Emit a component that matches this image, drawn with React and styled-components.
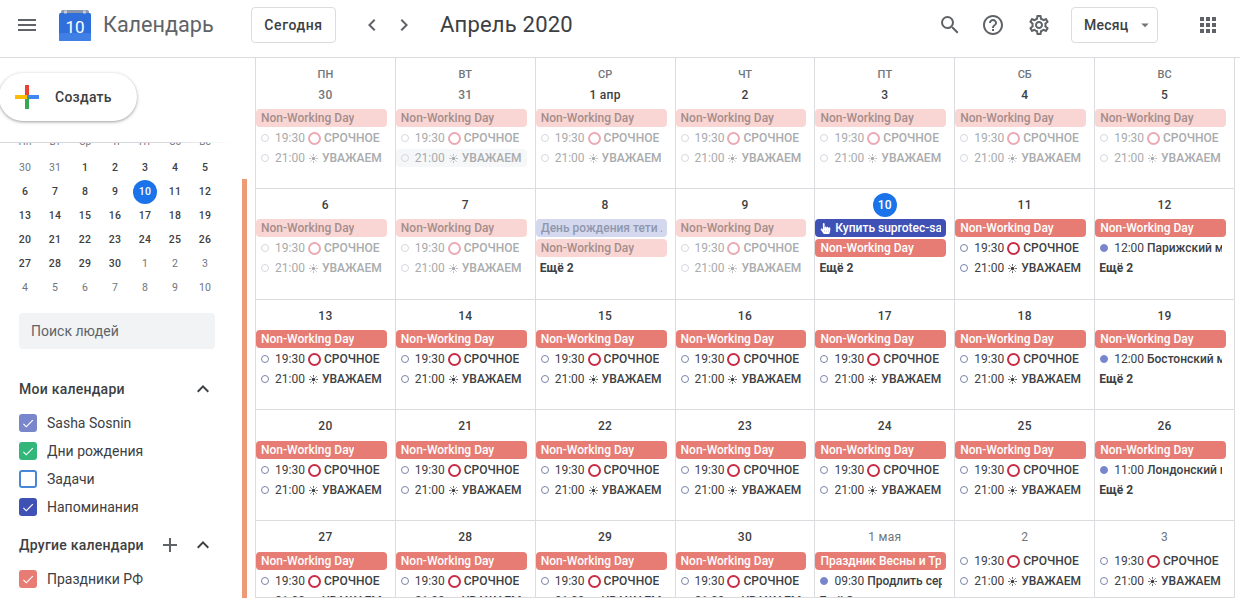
// App.jsx
import styled, { createGlobalStyle } from "styled-components";
import {
  MdMenu,
  MdChevronLeft,
  MdChevronRight,
  MdSearch,
  MdHelpOutline,
  MdOutlineSettings,
  MdApps,
  MdArrowDropDown,
  MdExpandLess,
  MdAdd,
  MdCheck,
} from "react-icons/md";
import { FaHandPointer } from "react-icons/fa";

const GlobalStyle = createGlobalStyle`
  html, body {
    margin: 0;
    height: 100%;
    overflow: hidden;
    background: #fff;
    font-family: Roboto, "Liberation Sans", sans-serif;
    color: #3c4043;
  }
`;

const Page = styled.div`
  width: 1240px;
  height: 598px;
  display: flex;
  flex-direction: column;
  overflow: hidden;
`;

const Header = styled.header`
  height: 57px;
  flex: none;
  display: flex;
  align-items: flex-start;
  border-bottom: 1px solid #dadce0;
  box-sizing: content-box;
`;

const IconSlot = styled.div`
  width: ${(p) => p.$w || 32}px;
  height: 50px;
  flex: none;
  display: flex;
  align-items: center;
  justify-content: center;
  color: #5f6368;
  margin-left: ${(p) => p.$ml || 0}px;
  margin-right: ${(p) => p.$mr || 0}px;
`;

const Brand = styled.div`
  font-size: 21.6px;
  line-height: 50px;
  color: #5f6368;
  margin-left: 12px;
  width: 148px;
  flex: none;
`;

const OutlineButton = styled.div`
  height: 36px;
  margin-top: 7px;
  margin-left: ${(p) => p.$ml || 0}px;
  width: ${(p) => p.$w}px;
  flex: none;
  box-sizing: border-box;
  border: 1px solid #dadce0;
  border-radius: 4px;
  display: flex;
  align-items: center;
  justify-content: center;
  font-size: 14px;
  font-weight: 500;
  letter-spacing: 0.6px;
  color: #3c4043;
`;

const ViewButton = styled(OutlineButton)`
  justify-content: space-between;
  padding: 0 3px 0 12px;
  letter-spacing: 0.25px;
`;

const Title = styled.div`
  font-size: 22px;
  letter-spacing: 0.2px;
  line-height: 50px;
  color: #3c4043;
  margin-left: 20px;
  flex: 1;
`;

const LogoBox = styled.svg`
  flex: none;
  margin: 9px 0 0 20px;
`;

const Body = styled.div`
  flex: 1;
  display: flex;
  min-height: 0;
`;

const Sidebar = styled.aside`
  width: 255px;
  flex: none;
  position: relative;
  overflow: hidden;
  display: flex;
  flex-direction: column;
`;

const ScrollThumb = styled.div`
  position: absolute;
  left: 242px;
  top: 121px;
  bottom: 0;
  width: 5px;
  background: #ec9b76;
`;

const CreateArea = styled.div`
  height: 84px;
  flex: none;
  padding-top: 15px;
  box-sizing: border-box;
`;

const CreateButton = styled.div`
  width: 138px;
  height: 48px;
  margin-left: -1px;
  box-sizing: border-box;
  padding-left: 16px;
  border-radius: 24px;
  display: flex;
  align-items: center;
  gap: 16px;
  font-size: 14px;
  font-weight: 500;
  letter-spacing: 0.25px;
  color: #3c4043;
  background: #fff;
  box-shadow: 0 1px 3px 1px rgba(60, 64, 67, 0.2), 0 1px 2px rgba(60, 64, 67, 0.25);
`;

const MiniCalendar = styled.div`
  height: 157px;
  flex: none;
  padding-left: 10px;
  overflow: hidden;
  position: relative;
  &::before {
    content: "";
    position: absolute;
    top: 0;
    left: 0;
    width: 232px;
    height: 1px;
    background: linear-gradient(to right, #d5d7da 70%, rgba(218, 220, 224, 0));
  }
`;

const MiniGrid = styled.div`
  display: grid;
  grid-template-columns: repeat(7, 30px);
  grid-auto-rows: 24px;
`;

const MiniWeekdays = styled(MiniGrid)`
  height: 5px;
  overflow: hidden;
  font-size: 10px;
  color: #70757a;
  grid-auto-rows: 5px;
  margin-bottom: 9px;
`;

const MiniHead = styled.div`
  text-align: center;
  line-height: 5px;
  margin-top: -3px;
`;

const MiniDay = styled.div`
  display: flex;
  align-items: center;
  justify-content: center;
  font-size: 10.5px;
  letter-spacing: 0.2px;
  font-weight: ${(p) => (p.$other ? 400 : 500)};
  color: ${(p) => (p.$today ? "#fff" : p.$other ? "#70757a" : "#3c4043")};
  & > span {
    width: 24px;
    height: 24px;
    line-height: 24px;
    text-align: center;
    border-radius: 50%;
    background: ${(p) => (p.$today ? "#1a73e8" : "transparent")};
  }
`;

const PeopleSearch = styled.div`
  width: 196px;
  height: 36px;
  margin: 14px 0 0 19px;
  padding-left: 12px;
  box-sizing: border-box;
  background: #f1f3f4;
  border-radius: 4px;
  font-size: 14px;
  line-height: 36px;
  color: #5f6368;
`;

const SectionTitle = styled.div`
  display: flex;
  align-items: center;
  width: 196px;
  height: 28px;
  margin-left: 19px;
  margin-top: ${(p) => p.$mt}px;
  font-size: 14px;
  font-weight: 500;
  letter-spacing: 0.25px;
  color: #3c4043;
  & > span {
    flex: 1;
  }
`;

const AddIcon = styled(MdAdd)`
  margin-right: 9px;
  color: #5f6368;
`;

const CalendarList = styled.div`
  margin-top: 6px;
`;

const CalendarRow = styled.div`
  display: flex;
  align-items: center;
  gap: 10px;
  height: 28px;
  margin-left: 19px;
  font-size: 14px;
  color: #3c4043;
`;

const Checkbox = styled.div`
  width: 18px;
  height: 18px;
  box-sizing: border-box;
  border-radius: 3px;
  border: 2px solid ${(p) => p.$color};
  background: ${(p) => (p.$on ? p.$color : "#fff")};
  display: flex;
  align-items: center;
  justify-content: center;
  color: #fff;
`;

const MonthGrid = styled.main`
  width: 980px;
  flex: none;
  display: grid;
  grid-template-columns: repeat(7, 1fr);
  grid-template-rows: 131px 111px 110px 111px 1fr;
  overflow: hidden;
  border-right: 1px solid #dadce0;
  box-sizing: border-box;
`;

const DayCell = styled.div`
  min-width: 0;
  overflow: hidden;
  box-sizing: border-box;
  border-left: 1px solid #dadce0;
  border-bottom: 1px solid #dadce0;
`;

const EventList = styled.div`
  padding-right: 8px;
  margin-top: ${(p) => (p.$first ? -1 : p.$shifted ? 1 : 0)}px;
`;

const WeekdayLabel = styled.div`
  text-align: center;
  font-size: 11px;
  font-weight: 500;
  line-height: 11px;
  color: #70757a;
  margin-top: 11px;
`;

const DateLabel = styled.div`
  height: 30px;
  display: flex;
  align-items: center;
  justify-content: center;
  font-size: 12px;
  font-weight: ${(p) => (p.$muted && !p.$first ? 400 : 500)};
  letter-spacing: 0.3px;
  color: ${(p) => (p.$muted ? "#70757a" : "#3c4043")};
  padding-top: ${(p) => (p.$first ? 0 : 2)}px;
  box-sizing: border-box;
  & > span {
    min-width: 24px;
    height: 24px;
    line-height: 24px;
    text-align: center;
    border-radius: 50%;
    background: ${(p) => (p.$today ? "#1a73e8" : "transparent")};
    color: ${(p) => (p.$today ? "#fff" : "inherit")};
  }
`;

const chipColors = {
  red: ["#e67c73", "#fff", "#f9d6d3", "#a58d8c"],
  blue: ["#3f51b5", "#fff", "#3f51b5", "#fff"],
  lilac: ["#d3d8ee", "#9097ad", "#d3d8ee", "#9097ad"],
};

const Chip = styled.div`
  height: 18px;
  margin-bottom: 2px;
  padding: 0 5px;
  border-radius: 4px;
  display: flex;
  align-items: center;
  gap: 4px;
  font-size: 12px;
  font-weight: 500;
  line-height: 18px;
  white-space: nowrap;
  overflow: hidden;
  background: ${(p) => chipColors[p.$kind][p.$faded ? 2 : 0]};
  color: ${(p) => chipColors[p.$kind][p.$faded ? 3 : 1]};
  & > span {
    overflow: hidden;
  }
`;

const EventRow = styled.div`
  height: 18px;
  margin-bottom: 2px;
  padding: 0 4px 0 5px;
  border-radius: 4px;
  display: flex;
  align-items: center;
  font-size: 12px;
  white-space: nowrap;
  overflow: hidden;
  color: ${(p) => (p.$faded ? "#a9abad" : "#3c4043")};
  background: ${(p) => (p.$hover ? "#f6f7f8" : "transparent")};
`;

const Dot = styled.i`
  width: 8px;
  height: 8px;
  flex: none;
  box-sizing: border-box;
  margin-right: 6px;
  border-radius: 50%;
  border: 1px solid ${(p) => (p.$faded ? "#d5d7de" : "#7b83a8")};
  background: ${(p) => (p.$solid ? "#7986cb" : "transparent")};
  ${(p) => p.$solid && "border-color: #7986cb;"}
`;

const Ring = styled.i`
  width: 13px;
  height: 13px;
  flex: none;
  box-sizing: border-box;
  margin: 0 3px;
  border-radius: 50%;
  border: 2.5px solid ${(p) => (p.$faded ? "#eba9b3" : "#c92c45")};
`;

const SunIcon = styled.svg`
  flex: none;
  margin: 0 4px;
  color: ${(p) => (p.$faded ? "#a9abad" : "#3c4043")};
`;

const EventName = styled.b`
  font-weight: 500;
  overflow: hidden;
`;

const More = styled.div`
  height: 18px;
  padding-left: 4px;
  font-size: 12px;
  font-weight: 700;
  line-height: 18px;
  color: #3c4043;
`;

const LogoMark = () => (
  <LogoBox width="32" height="32" viewBox="0 0 32 32">
    <path d="M2 3 Q2 1 4 1 H28 Q30 1 30 3 V8 H2 Z" fill="#8a97ad" />
    <rect x="0" y="4" width="32" height="28" rx="1.5" fill="#2f6fdc" />
    <rect x="0" y="24" width="32" height="8" rx="1.5" fill="#3f7fe6" />
    <rect x="5" y="1.5" width="3" height="3" fill="#c4ccd8" />
    <rect x="24" y="1.5" width="3" height="3" fill="#c4ccd8" />
    <text x="16" y="24" fontSize="17" fontFamily="Roboto, sans-serif" fill="#fff" textAnchor="middle">
      10
    </text>
  </LogoBox>
);

const PlusMark = () => (
  <svg width="24" height="24" viewBox="0 0 24 24">
    <rect x="10" y="0" width="4" height="12" fill="#ea4335" />
    <rect x="12" y="10" width="12" height="4" fill="#4285f4" />
    <rect x="10" y="12" width="4" height="12" fill="#34a853" />
    <rect x="0" y="10" width="12" height="4" fill="#fbbc04" />
  </svg>
);

const Sun = ({ faded }) => (
  <SunIcon $faded={faded} width="9" height="9" viewBox="0 0 10 10">
    <circle cx="5" cy="5" r="2" fill="currentColor" />
    <path
      d="M5 0v2M5 8v2M0 5h2M8 5h2M1.5 1.5l1.4 1.4M7.1 7.1l1.4 1.4M1.5 8.5l1.4-1.4M7.1 2.9l1.4-1.4"
      stroke="currentColor"
      strokeWidth="0.9"
    />
  </SunIcon>
);

const miniDays = [
  ["30", "31", 1, 2, 3, 4, 5],
  [6, 7, 8, 9, 10, 11, 12],
  [13, 14, 15, 16, 17, 18, 19],
  [20, 21, 22, 23, 24, 25, 26],
  [27, 28, 29, 30, "1", "2", "3"],
  ["4", "5", "6", "7", "8", "9", "10"],
];

const myCalendars = [
  { name: "Sasha Sosnin", color: "#7986cb", on: true },
  { name: "Дни рождения", color: "#33b679", on: true },
  { name: "Задачи", color: "#4a86d8", on: false },
  { name: "Напоминания", color: "#3f51b5", on: true },
];

const NW = { type: "chip", kind: "red", text: "Non-Working Day" };
const URGENT = { type: "urgent" };
const RESPECT = { type: "respect" };
const usual = [NW, URGENT, RESPECT];
const timed = (time, text) => ({ type: "timed", time, text });
const more = (n) => ({ type: "more", n });

const weekdays = ["ПН", "ВТ", "СР", "ЧТ", "ПТ", "СБ", "ВС"];

const weeks = [
  [
    { label: "30", muted: true, faded: true, events: usual },
    { label: "31", muted: true, faded: true, events: usual, hoverRespect: true },
    { label: "1 апр", faded: true, events: usual },
    { label: "2", faded: true, events: usual },
    { label: "3", faded: true, events: usual },
    { label: "4", faded: true, events: usual },
    { label: "5", faded: true, events: usual },
  ],
  [
    { label: "6", faded: true, events: usual },
    { label: "7", faded: true, events: usual },
    {
      label: "8",
      faded: true,
      events: [{ type: "chip", kind: "lilac", text: "День рождения тети Л" }, NW, more(2)],
    },
    { label: "9", faded: true, events: usual },
    {
      label: "10",
      today: true,
      events: [{ type: "chip", kind: "blue", text: "Купить suprotec-sa", hand: true }, NW, more(2)],
    },
    { label: "11", events: usual },
    { label: "12", events: [NW, timed("12:00", "Парижский мир"), more(2)] },
  ],
  [
    { label: "13", events: usual },
    { label: "14", events: usual },
    { label: "15", events: usual },
    { label: "16", events: usual },
    { label: "17", events: usual },
    { label: "18", events: usual },
    { label: "19", events: [NW, timed("12:00", "Бостонский мир"), more(2)] },
  ],
  [
    { label: "20", events: usual },
    { label: "21", events: usual },
    { label: "22", events: usual },
    { label: "23", events: usual },
    { label: "24", events: usual },
    { label: "25", events: usual },
    { label: "26", events: [NW, timed("11:00", "Лондонский мир"), more(2)] },
  ],
  [
    { label: "27", events: usual },
    { label: "28", events: usual },
    { label: "29", events: usual },
    { label: "30", events: usual },
    {
      label: "1 мая",
      muted: true,
      events: [
        { type: "chip", kind: "red", text: "Праздник Весны и Труда" },
        timed("09:30", "Продлить сервис"),
        more(3),
      ],
    },
    { label: "2", muted: true, events: [URGENT, RESPECT] },
    { label: "3", muted: true, events: [URGENT, RESPECT] },
  ],
];

const Event = ({ event, faded, hover }) => {
  if (event.type === "chip") {
    return (
      <Chip $kind={event.kind} $faded={faded}>
        {event.hand && <FaHandPointer size={11} />}
        <span>{event.text}</span>
      </Chip>
    );
  }
  if (event.type === "more") {
    return <More>Ещё {event.n}</More>;
  }
  if (event.type === "timed") {
    return (
      <EventRow>
        <Dot $solid />
        {event.time}&nbsp;<EventName>{event.text}</EventName>
      </EventRow>
    );
  }
  const urgent = event.type === "urgent";
  return (
    <EventRow $faded={faded} $hover={hover}>
      <Dot $faded={faded} />
      {urgent ? "19:30" : "21:00"}
      {urgent ? <Ring $faded={faded} /> : <Sun faded={faded} />}
      <EventName>{urgent ? "СРОЧНОЕ" : "УВАЖАЕМ"}</EventName>
    </EventRow>
  );
};

const App = () => (
  <Page>
    <GlobalStyle />
    <Header>
      <IconSlot $w={24} $ml={15}>
        <MdMenu size={24} />
      </IconSlot>
      <LogoMark />
      <Brand>Календарь</Brand>
      <OutlineButton $w={85}>Сегодня</OutlineButton>
      <IconSlot $ml={20}>
        <MdChevronLeft size={24} />
      </IconSlot>
      <IconSlot>
        <MdChevronRight size={24} />
      </IconSlot>
      <Title>Апрель 2020</Title>
      <IconSlot>
        <MdSearch size={24} />
      </IconSlot>
      <IconSlot $ml={11}>
        <MdHelpOutline size={24} />
      </IconSlot>
      <IconSlot $ml={14}>
        <MdOutlineSettings size={24} />
      </IconSlot>
      <ViewButton $w={87} $ml={16}>
        Месяц
        <MdArrowDropDown size={18} color="#70757a" />
      </ViewButton>
      <IconSlot $ml={34} $mr={16}>
        <MdApps size={24} />
      </IconSlot>
    </Header>
    <Body>
      <Sidebar>
        <CreateArea>
          <CreateButton>
            <PlusMark />
            Создать
          </CreateButton>
        </CreateArea>
        <MiniCalendar>
          <MiniWeekdays>
            {["Пн", "Вт", "Ср", "Чт", "Пт", "Сб", "Вс"].map((d) => (
              <MiniHead key={d}>{d}</MiniHead>
            ))}
          </MiniWeekdays>
          <MiniGrid>
            {miniDays.flat().map((d, i) => (
              <MiniDay key={i} $other={typeof d === "string"} $today={d === 10}>
                <span>{d}</span>
              </MiniDay>
            ))}
          </MiniGrid>
        </MiniCalendar>
        <PeopleSearch>Поиск людей</PeopleSearch>
        <SectionTitle $mt={26}>
          <span>Мои календари</span>
          <MdExpandLess size={24} color="#3c4043" />
        </SectionTitle>
        <CalendarList>
          {myCalendars.map((c) => (
            <CalendarRow key={c.name}>
              <Checkbox $color={c.color} $on={c.on}>
                {c.on && <MdCheck size={15} />}
              </Checkbox>
              {c.name}
            </CalendarRow>
          ))}
        </CalendarList>
        <SectionTitle $mt={10}>
          <span>Другие календари</span>
          <AddIcon size={24} />
          <MdExpandLess size={24} color="#3c4043" />
        </SectionTitle>
        <CalendarList>
          <CalendarRow>
            <Checkbox $color="#e67c73" $on>
              <MdCheck size={15} />
            </Checkbox>
            Праздники РФ
          </CalendarRow>
        </CalendarList>
        <ScrollThumb />
      </Sidebar>
      <MonthGrid>
        {weeks.map((week, w) =>
          week.map((day, d) => (
            <DayCell key={`${w}-${d}`}>
              {w === 0 && <WeekdayLabel>{weekdays[d]}</WeekdayLabel>}
              <DateLabel $muted={day.muted} $today={day.today} $first={w === 0}>
                <span>{day.label}</span>
              </DateLabel>
              <EventList $first={w === 0} $shifted={w >= 3}>
                {day.events.map((event, i) => (
                  <Event
                    key={i}
                    event={event}
                    faded={day.faded}
                    hover={day.hoverRespect && event.type === "respect"}
                  />
                ))}
              </EventList>
            </DayCell>
          ))
        )}
      </MonthGrid>
    </Body>
  </Page>
);

export default App;
